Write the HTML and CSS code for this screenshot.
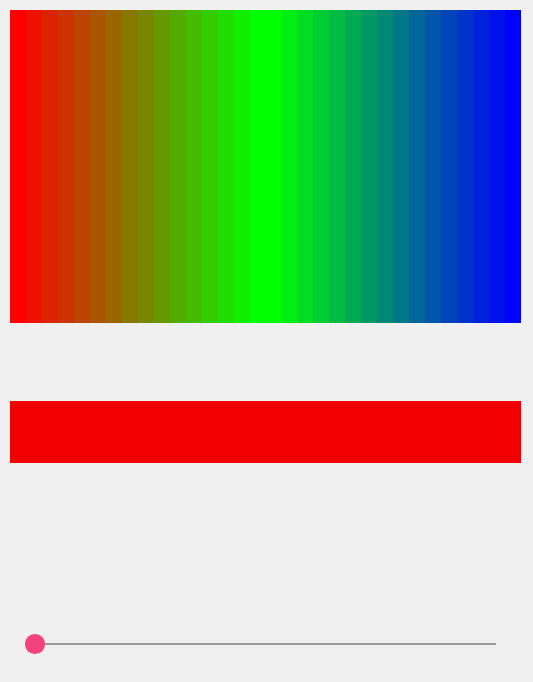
FILE: index.html
```html
<!DOCTYPE html>
<html>
<head>
<meta charset="utf-8">
<link rel="stylesheet" href="styles.css">
</head>
<body>
<div class="page">
  <div class="spectrum">
    <div class="stripe" style="background:rgb(255,0,0)"></div>
    <div class="stripe" style="background:rgb(238,17,0)"></div>
    <div class="stripe" style="background:rgb(221,34,0)"></div>
    <div class="stripe" style="background:rgb(204,51,0)"></div>
    <div class="stripe" style="background:rgb(187,68,0)"></div>
    <div class="stripe" style="background:rgb(170,85,0)"></div>
    <div class="stripe" style="background:rgb(153,102,0)"></div>
    <div class="stripe" style="background:rgb(136,119,0)"></div>
    <div class="stripe" style="background:rgb(119,136,0)"></div>
    <div class="stripe" style="background:rgb(102,153,0)"></div>
    <div class="stripe" style="background:rgb(85,170,0)"></div>
    <div class="stripe" style="background:rgb(68,187,0)"></div>
    <div class="stripe" style="background:rgb(51,204,0)"></div>
    <div class="stripe" style="background:rgb(34,221,0)"></div>
    <div class="stripe" style="background:rgb(17,238,0)"></div>
    <div class="stripe wide" style="background:rgb(0,255,0)"></div>
    <div class="stripe" style="background:rgb(0,238,17)"></div>
    <div class="stripe" style="background:rgb(0,221,34)"></div>
    <div class="stripe" style="background:rgb(0,204,51)"></div>
    <div class="stripe" style="background:rgb(0,187,68)"></div>
    <div class="stripe" style="background:rgb(0,170,85)"></div>
    <div class="stripe" style="background:rgb(0,153,102)"></div>
    <div class="stripe" style="background:rgb(0,136,119)"></div>
    <div class="stripe" style="background:rgb(0,119,136)"></div>
    <div class="stripe" style="background:rgb(0,102,153)"></div>
    <div class="stripe" style="background:rgb(0,85,170)"></div>
    <div class="stripe" style="background:rgb(0,68,187)"></div>
    <div class="stripe" style="background:rgb(0,51,204)"></div>
    <div class="stripe" style="background:rgb(0,34,221)"></div>
    <div class="stripe" style="background:rgb(0,17,238)"></div>
    <div class="stripe" style="background:rgb(0,0,255)"></div>
  </div>
  <div class="swatch"></div>
  <div class="slider">
    <div class="track"></div>
    <div class="thumb"></div>
  </div>
</div>
</body>
</html>
```

FILE: styles.css
```css
html, body {
  margin: 0;
  padding: 0;
  background: #f0f0f0;
}
.page {
  padding: 10px 12px 10px 10px;
  display: flex;
  flex-direction: column;
}
.spectrum {
  display: flex;
  height: 312.5px;
  margin-top: 0.33px;
}
.stripe {
  flex: 1 1 0;
}
.stripe.wide {
  flex: 1.9 1 0;
}
.swatch {
  margin-top: 78px;
  height: 62px;
  background: #f00000;
}
.slider {
  position: relative;
  margin: 171.5px 0 0 15px;
  width: 471px;
  height: 20px;
}
.track {
  position: absolute;
  left: 10px;
  right: 0;
  top: 8.5px;
  height: 2px;
  background: #9a9a9a;
}
.thumb {
  position: absolute;
  left: 0;
  top: 0;
  width: 19.5px;
  height: 19.5px;
  border-radius: 50%;
  background: #f2437f;
}
```
